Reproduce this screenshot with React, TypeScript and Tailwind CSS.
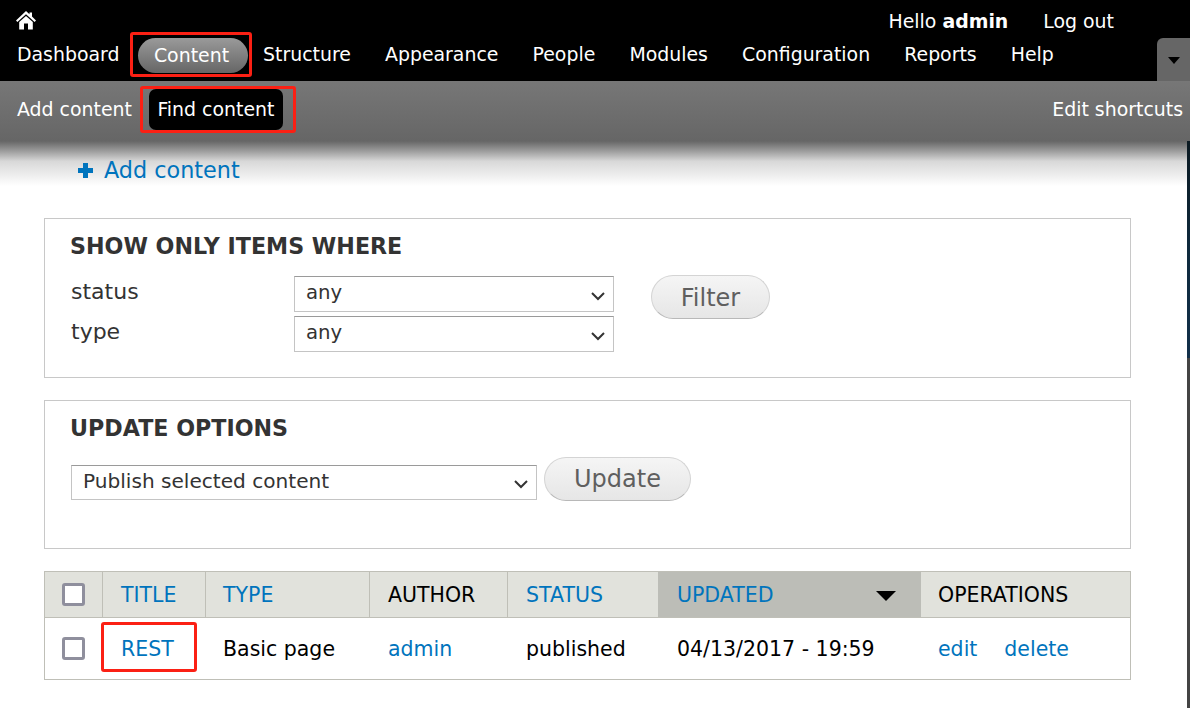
const font = { fontFamily: '"DejaVu Sans", sans-serif' };

const menuLinks = ["Structure", "Appearance", "People", "Modules", "Configuration", "Reports", "Help"];

function RedBox({ className }: { className: string }) {
  return <div className={`absolute border-[3px] border-[#fb2014] rounded-[3px] pointer-events-none ${className}`} />;
}

function FakeSelect({ label, className }: { label: string; className: string }) {
  return (
    <div className={`flex items-center justify-between bg-white border border-[#c4c4c4] border-t-[#9a9a9a] text-[#333] ${className}`}>
      <span className="-mt-[3px]">{label}</span>
      <svg width="16" height="10" viewBox="0 0 16 10" fill="none" className="mt-[3px]">
        <path d="M2 2 L8 8 L14 2" stroke="#333" strokeWidth="2" />
      </svg>
    </div>
  );
}

function GreyButton({ label, className }: { label: string; className: string }) {
  return (
    <div className={`flex items-center justify-center rounded-[22px] border border-[#d4d4d4] border-b-[#b8b8b8] bg-gradient-to-b from-[#f5f5f5] to-[#e6e6e6] text-[#5f5f5f] text-[24px] ${className}`}>
      {label}
    </div>
  );
}

function Checkbox() {
  return <div className="w-[23px] h-[23px] rounded-[3px] border-[3px] border-[#8f8f9d] bg-white" />;
}

export default function App() {
  return (
    <div className="relative w-[1190px] h-[708px] overflow-hidden bg-white text-[20.5px] leading-none" style={font}>
      {/* Toolbar */}
      <div className="h-[81px] bg-black text-white relative text-[18.9px]">
        <div className="flex justify-between h-[41px]">
          <svg width="20" height="19" viewBox="0 0 20 19" className="ml-[16px] mt-[11px]">
            <path d="M10 0 L13.5 3.2 V1.5 H16 V5.5 L20 9.5 L18.6 11 L10 3.2 L1.4 11 L0 9.5 Z M3.2 11 L10 5 L16.8 11 V18.5 H12 V12.5 H8 V18.5 H3.2 Z" fill="white" />
          </svg>
          <div className="flex gap-[35px] pr-[76px] pt-[12px]">
            <span>Hello <b>admin</b></span>
            <span>Log out</span>
          </div>
        </div>
        <div className="flex items-center h-[40px] -mt-[7px] pl-[17px]">
          <span>Dashboard</span>
          <span className="ml-[18px] w-[110px] h-[35px] mt-[2px] pr-[2px] rounded-[18px] bg-gradient-to-b from-[#9a9a9a] to-[#666] flex items-center justify-center">Content</span>
          <div className="flex gap-[34.1px] ml-[15.5px]">
            {menuLinks.map((l) => (
              <span key={l}>{l}</span>
            ))}
          </div>
        </div>
        <div className="absolute right-0 top-[38px] w-[33px] h-[43px] bg-[#666] rounded-tl-[6px] flex justify-center pt-[19px]">
          <div className="w-0 h-0 border-x-[6px] border-x-transparent border-t-[7px] border-t-black" />
        </div>
      </div>

      {/* Shortcuts bar */}
      <div className="h-[60px] bg-gradient-to-b from-[#777] to-[#666] text-white flex items-start justify-between pl-[17px] pr-[7px] text-[18.9px]">
        <div className="flex items-center">
          <span className="mt-[8px]">Add content</span>
          <span className="ml-[17px] mt-[8px] h-[41px] w-[134px] rounded-[7px] bg-black flex items-center justify-center">Find content</span>
        </div>
        <span className="mt-[19px]">Edit shortcuts</span>
      </div>
      <div className="absolute top-[141px] left-0 w-full h-[45px] bg-gradient-to-b from-[#666] via-[#d8d8d8] via-[45%] to-white" />

      {/* Sliver of the window behind, along the right edge */}
      <div className="absolute top-[141px] right-0 w-[3px] h-[567px] flex flex-col">
        <div className="h-[217px] bg-gradient-to-b from-[#0b1a22] to-[#12304a] via-[#0f2a3d]" />
        <div className="flex-1 bg-[#444]" />
      </div>

      {/* Page content */}
      <div className="relative pl-[44px] pr-[59px]">
        <div className="flex items-center gap-[11px] pl-[34px] h-[58px] text-[#0074bd] text-[22.3px]">
          <div className="relative w-[15px] h-[15px] mt-[1px]">
            <div className="absolute left-[5px] top-0 w-[5px] h-[15px] bg-[#0074bd]" />
            <div className="absolute left-0 top-[5px] w-[15px] h-[5px] bg-[#0074bd]" />
          </div>
          <span>Add content</span>
        </div>

        <div className="mt-[19px] h-[160px] border border-[#c8c8c8] pl-[25px] pt-[15px]">
          <h2 className="text-[22.2px] font-bold text-[#333] leading-[24px]">SHOW ONLY ITEMS WHERE</h2>
          <div className="flex mt-[18px]">
            <div className="w-[224px] text-[#333] text-[22px] leading-[40px] -mt-[4px] pl-[1px]">
              <div>status</div>
              <div>type</div>
            </div>
            <div className="flex flex-col gap-[4px] w-[320px] text-[19.7px]">
              <FakeSelect label="any" className="h-[36px] pl-[11px] pr-[7px]" />
              <FakeSelect label="any" className="h-[36px] pl-[11px] pr-[7px]" />
            </div>
            <GreyButton label="Filter" className="ml-[37px] -mt-[1px] w-[119px] h-[44px] pt-[2px]" />
          </div>
        </div>

        <div className="mt-[22px] h-[149px] border border-[#c8c8c8] pl-[25px] pt-[15px]">
          <h2 className="text-[22.2px] font-bold text-[#333] leading-[24px]">UPDATE OPTIONS</h2>
          <div className="flex mt-[15px] pl-[1px]">
            <FakeSelect label="Publish selected content" className="w-[466px] h-[35px] pl-[11px] pr-[7px] mt-[10px] text-[20.1px]" />
            <GreyButton label="Update" className="ml-[7px] mt-[2px] w-[147px] h-[44px]" />
          </div>
        </div>

        {/* Content table */}
        <div className="mt-[22px] border border-[#bfbfb7]">
          <div className="grid grid-cols-[58px_103px_164px_138px_150px_263px_1fr] h-[46px] bg-[#e1e2dc] border-b border-[#bfbfb7] items-stretch">
            <div className="flex items-center justify-center border-r border-[#bfbfb7] pr-[1px]"><Checkbox /></div>
            <div className="flex items-center pl-[18px] pt-[2px] border-r border-[#bfbfb7] text-[#0074bd]">TITLE</div>
            <div className="flex items-center pl-[17px] pt-[2px] border-r border-[#bfbfb7] text-[#0074bd]">TYPE</div>
            <div className="flex items-center pl-[18px] pt-[2px] border-r border-[#bfbfb7] text-black">AUTHOR</div>
            <div className="flex items-center pl-[18px] pt-[2px] text-[#0074bd]">STATUS</div>
            <div className="flex items-center justify-between pl-[19px] pr-[25px] pt-[2px] bg-[#bcbdb7] text-[#0074bd]">
              UPDATED
              <div className="w-0 h-0 mt-[1px] border-x-[10px] border-x-transparent border-t-[10px] border-t-black" />
            </div>
            <div className="flex items-center pl-[17px] pt-[2px] text-black">OPERATIONS</div>
          </div>
          <div className="grid grid-cols-[58px_103px_164px_138px_150px_263px_1fr] h-[61px] items-center text-black">
            <div className="flex justify-center pr-[1px]"><Checkbox /></div>
            <div className="pl-[18px] pt-[2px] text-[#0074bd]">REST</div>
            <div className="pl-[17px] pt-[2px]">Basic page</div>
            <div className="pl-[18px] pt-[2px] text-[#0074bd]">admin</div>
            <div className="pl-[18px] pt-[2px]">published</div>
            <div className="pl-[19px] pt-[2px]">04/13/2017 - 19:59</div>
            <div className="pl-[17px] pt-[2px] text-[#0074bd] flex gap-[27px]"><span>edit</span><span>delete</span></div>
          </div>
        </div>
      </div>

      {/* Red annotation boxes */}
      <RedBox className="left-[130px] top-[32px] w-[122px] h-[45px]" />
      <RedBox className="left-[140px] top-[86px] w-[156px] h-[47px]" />
      <RedBox className="left-[101px] top-[622px] w-[96px] h-[50px]" />
    </div>
  );
}
